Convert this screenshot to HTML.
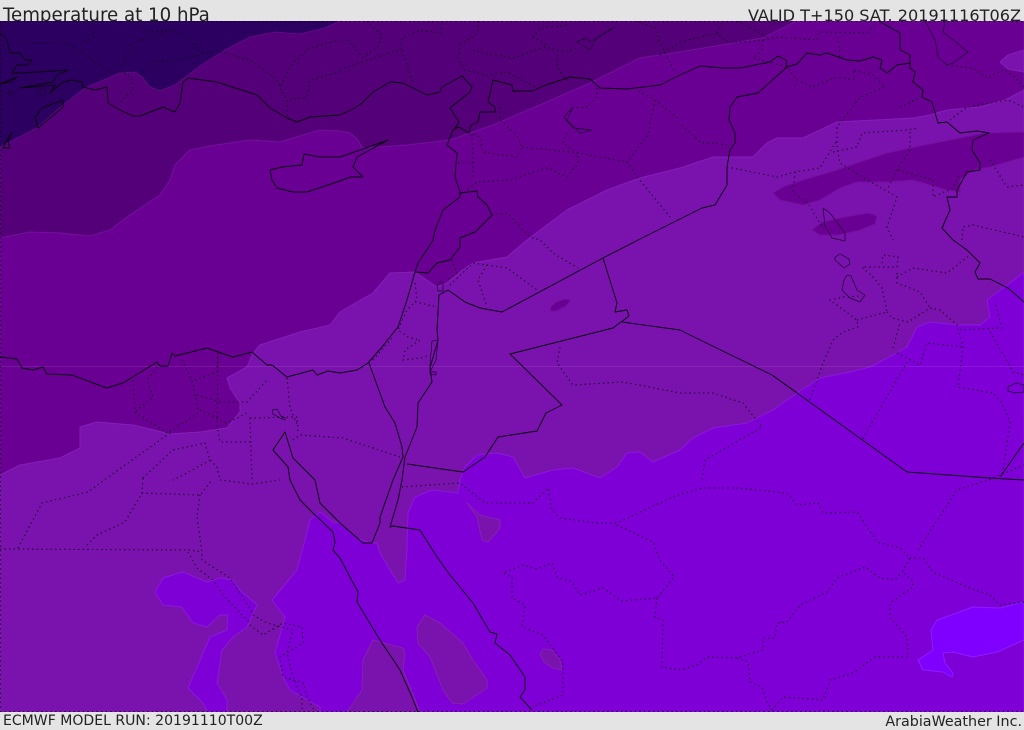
<!DOCTYPE html>
<html lang="en"><head><meta charset="utf-8"><title>Temperature at 10 hPa</title>
<style>
html,body{margin:0;padding:0;background:#e4e4e4;}
body{width:1024px;height:729px;overflow:hidden;position:relative;font-family:"DejaVu Sans","Liberation Sans",sans-serif;color:#222;}
.t{position:absolute;white-space:nowrap;line-height:1;}
svg{position:absolute;left:0;top:21px;}
.s{fill:none;stroke:#0a0010;stroke-width:.95;stroke-linejoin:round;}
.n{fill:none;stroke:#1d0030;stroke-width:.7;stroke-linejoin:round;}
.d{fill:none;stroke:#0a0010;stroke-width:1.1;stroke-dasharray:1.2 3.4;stroke-linejoin:round;}
.f{stroke-width:1;stroke-linejoin:round;}
</style></head><body>
<div class="t" style="left:3px;top:7px;font-size:18.2px;">Temperature at 10 hPa</div>
<div class="t" style="right:3px;top:8px;font-size:16.1px;">VALID T+150 SAT. 20191116T06Z</div>
<div class="t" style="left:3px;top:714px;font-size:14.05px;">ECMWF MODEL RUN: 20191110T00Z</div>
<div class="t" style="right:2px;top:715px;font-size:14.3px;">ArabiaWeather Inc.</div>
<svg width="1024" height="691" viewBox="0 21 1024 691">
<rect x="0" y="21" width="1024" height="691" fill="#2c0060"/>
<polygon class="f" fill="#530079" stroke="#5e0a82" points="0,147 37,128 62,106 85,88 120,73 135,72 143,78 150,87 160,91 175,85 200,66 225,50 250,37 275,32 300,34 325,28 340,21 1024,21 1024,712 0,712"/>
<polygon class="f" fill="#690093" stroke="#74109c" points="0,238 30,232 60,233 90,236 110,230 130,215 160,195 170,180 175,165 190,150 210,146 250,140 280,142 320,130 340,131 350,133 358,140 362,148 407,145 450,140 493,125 540,105 590,83 640,58 680,52 763,38 797,21 1024,21 1024,712 0,712"/>
<polygon class="f" fill="#7a12ad" stroke="#8420b6" points="0,475 20,465 60,458 80,448 80,427 97,422 133,425 170,434 200,432 227,428 240,412 240,403 230,388 227,378 247,367 253,353 260,345 300,332 330,325 340,312 357,302 373,293 390,273 415,272 437,287 447,283 460,272 473,263 507,257 527,240 567,210 607,190 640,178 680,168 713,157 753,157 767,143 777,138 803,138 837,122 913,118 930,115 947,110 980,107 1005,100 1024,90 1024,712 0,712"/>
<polygon class="f" fill="#690093" stroke="#74109c" points="1024,132 985,133 940,142 910,148 887,153 857,163 837,170 803,180 785,186 773,193 780,200 803,205 820,200 840,188 857,182 887,182 913,180 947,190 960,192 960,180 973,170 990,167 1024,157"/>
<polygon class="f" fill="#690093" stroke="#74109c" points="812,230 822,222 845,217 868,213 877,216 875,224 860,230 838,235 820,235"/>
<polygon class="f" fill="#690093" stroke="#74109c" points="550,308 556,302 565,299 571,300 566,306 556,311 551,311"/>
<polygon class="f" fill="#7a12ad" stroke="#8420b6" points="1024,50 1008,55 1000,62 1008,69 1024,72"/>
<polygon class="f" fill="#7f00d6" stroke="#8a18dc" points="1024,272 1010,283 987,300 990,317 980,325 957,325 930,322 917,327 912,337 907,347 893,355 870,367 850,372 820,378 797,393 773,410 747,423 713,428 693,438 680,450 653,462 640,452 627,453 617,467 600,478 573,468 553,470 525,478 513,457 497,453 477,455 465,467 460,480 458,493 432,490 415,497 408,513 407,547 405,580 398,583 390,570 380,553 377,543 370,543 357,538 340,523 333,522 320,512 310,520 305,540 297,570 272,600 285,617 275,653 283,677 290,690 320,707 320,712 1024,712"/>
<polygon class="f" fill="#7f00d6" stroke="#8a18dc" points="257,605 240,590 233,580 220,578 207,582 197,578 183,572 163,578 155,592 163,605 182,607 193,623 207,627 220,615 228,615 227,630 210,637 188,688 203,703 208,712 227,712 227,700 217,683 222,650 233,637 247,627"/>
<polygon class="f" fill="#7a12ad" stroke="#8420b6" points="425,615 440,623 463,643 473,660 487,680 487,688 463,704 452,703 443,690 430,657 418,643 417,627"/>
<polygon class="f" fill="#7a12ad" stroke="#8420b6" points="467,503 480,515 500,520 500,528 488,542 482,540 477,517"/>
<polygon class="f" fill="#7a12ad" stroke="#8420b6" points="373,640 403,648 405,653 403,670 420,712 347,712 362,690 363,660"/>
<polygon class="f" fill="#7a12ad" stroke="#8420b6" points="543,649 552,650 560,660 562,670 553,668 544,662 540,654"/>
<polygon class="f" fill="#8000ff" stroke="#8c1cff" points="1024,602 1000,608 973,607 957,613 937,620 931,630 933,650 918,660 923,670 943,672 952,677 953,673 945,663 943,653 953,652 973,657 997,652 1024,640"/>
<rect x="0" y="366" width="1024" height="1" fill="#fff" opacity=".09"/>

<!-- solid coast and borders -->
<polyline class="s" points="83,87 95,90 107,87 108,103 120,110 133,116 140,116 163,107 175,112 180,103 183,82 188,78 217,82 257,95 270,108 287,118 297,122 310,117 340,115 355,108 362,103 373,92 390,82 403,83 427,95 440,92 442,87 462,76 472,87 470,92 450,108 459,122 455,128 459,127 469,133 471,125 478,122 480,112 495,112 495,107 488,102 493,80 512,85 513,91 533,91 543,86 570,77 590,79 600,88 627,89 660,85 680,75 700,66 723,68 740,68 770,62 778,56 786,60 787,67 797,64 807,53 820,55 827,53 847,60 860,61 873,57 882,60 880,68 887,73 897,65 910,63"/>
<polyline class="s" points="787,67 758,93 737,97 730,107 729,120 735,133 735,143 730,150 727,167 727,185 715,205 702,208 680,219 638,240 603,258 502,312 480,308 465,302 458,297 448,290 439,295 437,330 438,340 430,368 432,382 418,403 417,427 405,457"/>
<polyline class="s" points="603,258 617,303 615,312 627,310 629,316 613,328 510,354 562,405 546,413 537,431 498,437 485,457 463,472 407,464"/>
<polyline class="s" points="622,322 680,330 690,335 772,375 907,472 990,478 1024,480"/>
<polyline class="s" points="1000,477 1012,460 1024,443"/>
<polyline class="s" points="880,21 882,23 900,33 900,50 910,55 910,68 915,72 913,82 923,90 922,97 932,102 938,123 947,122 960,133 977,131 989,133 973,140 972,150 980,163 980,170 967,172 957,190 957,197 947,197 950,210 942,228 953,240 967,250 980,263 975,272 978,279 990,279 1008,288 1024,302"/>
<polyline class="s" points="0,357 17,359 22,368 33,370 43,367 47,374 72,375 93,383 107,388 123,383 157,362 160,366 168,366 172,353 175,356 207,348 227,355 233,357 252,352 267,365 272,365 287,377 313,370 317,375 328,371 340,373 357,370 368,363 382,347 398,327 407,300 415,272 418,263 428,248 433,240 435,230 443,210 460,197 460,192 455,177 457,153 447,145 453,130 459,127"/>
<polyline class="s" points="415,272 428,273 437,263 450,260 460,247 460,238 475,232 492,215 487,205 478,197 477,191 460,193"/>
<polyline class="s" points="369,363 385,407 395,423 402,447 403,457 393,480 380,517 380,523 372,543 363,543 340,523 320,503 315,480 293,458 285,432 273,450 288,467 290,480 300,500 313,513 333,532 335,542 333,550 340,558 350,577 358,592 357,602 380,640 400,670 412,697 418,712"/>
<polyline class="s" points="405,457 402,480 398,500 390,527 393,526 420,530 437,557 450,575 473,603 490,632 497,634 495,643 510,655 525,677 525,690 520,697 532,710"/>
<polyline class="s" points="270,170 282,167 302,165 304,154 320,157 340,157 360,150 388,140 357,157 353,167 363,177 350,177 340,181 307,192 293,192 277,188 272,180 270,170"/>
<polyline class="s" points="0,33 3,35 7,40 10,53 20,53 25,60 32,60 28,65 17,65 12,73 23,73 68,70 57,75 53,82 20,88 55,85 50,93 63,82 72,80 82,82 83,88"/>
<polyline class="s" points="63,100 63,107 38,128 35,117 42,108 63,100"/>
<polyline class="s" points="0,84 17,77 10,82 0,84"/>
<polyline class="s" points="12,132 7,140 3,148 10,148 8,142 12,132"/>
<polyline class="n" points="8,91 14,91 14,94 8,94 8,91"/>
<polyline class="n" points="40,88 46,90 45,96 40,96 40,88"/>
<polyline class="n" points="615,27 597,38 590,50 577,42 585,38 590,42 597,38 612,28"/>
<polyline class="n" points="573,107 564,117 573,128 592,130 580,133 567,120 573,107"/>
<polyline class="n" points="925,21 935,40 938,57 947,65 953,63 968,52 957,43 943,32 945,21"/>
<polyline class="n" points="823,208 830,213 845,233 845,241 832,238 825,226 823,208"/>
<polyline class="n" points="835,257 840,254 849,259 850,264 844,268 835,260 835,257"/>
<polyline class="n" points="847,275 851,276 857,290 865,295 860,302 850,298 842,290 844,280 847,275"/>
<polyline class="n" points="440,282 443,282 443,291 438,291 437,285 440,282"/>
<polyline class="n" points="432,341 438,340 436,360 432,368 430,372 436,372 436,375 430,374 430,365 432,341"/>
<polyline class="n" points="272,410 277,409 281,416 285,418 285,420 280,418 273,414 272,410"/>
<polyline class="n" points="1008,387 1016,383 1024,385 1024,392 1015,393 1008,391 1008,387"/>

<!-- dotted borders -->
<polyline class="d" points="23,43 67,43 93,60 110,72 123,72 133,80 132,90 120,102"/>
<polyline class="d" points="93,23 93,37 80,43"/>
<polyline class="d" points="137,23 147,32 170,30 190,38 200,53 223,52 253,62 277,80 280,88 287,100 287,117"/>
<polyline class="d" points="170,30 132,43 122,67"/>
<polyline class="d" points="143,72 153,62 177,60 200,55"/>
<polyline class="d" points="340,40 310,48 293,63 287,73 280,88"/>
<polyline class="d" points="340,72 310,80 307,97 290,100"/>
<polyline class="d" points="367,21 382,35 378,47 363,57 347,40"/>
<polyline class="d" points="340,70 383,55 400,50 402,38 420,30 440,33 443,21"/>
<polyline class="d" points="402,50 413,83"/>
<polyline class="d" points="478,21 478,33 460,45 458,58 465,70 487,75 507,72 537,88"/>
<polyline class="d" points="473,50 483,53 513,58 545,47 567,52 578,47"/>
<polyline class="d" points="533,37 540,28 570,25"/>
<polyline class="d" points="533,37 547,45"/>
<polyline class="d" points="557,55 557,67 567,80"/>
<polyline class="d" points="637,21 655,28 660,43 675,72"/>
<polyline class="d" points="660,55 680,43"/>
<polyline class="d" points="597,88 597,97 587,107 573,108"/>
<polyline class="d" points="567,133 563,143 578,153 578,163 567,177 547,168 510,180 477,182 467,190"/>
<polyline class="d" points="500,107 500,120 517,135 522,147 517,157 483,152 480,137 472,133 473,163 473,180"/>
<polyline class="d" points="458,163 473,163"/>
<polyline class="d" points="522,147 578,153 627,162 648,135 655,100 637,90"/>
<polyline class="d" points="655,100 680,120"/>
<polyline class="d" points="627,162 638,178 670,217"/>
<polyline class="d" points="492,215 507,213 530,237 540,240 553,253 578,268"/>
<polyline class="d" points="450,285 473,263 507,268 537,290"/>
<polyline class="d" points="487,265 478,280 487,307"/>
<polyline class="d" points="452,260 457,273 447,280"/>
<polyline class="d" points="415,283 417,300 407,310 398,330 408,337 420,340 405,350 403,360 420,358 430,355"/>
<polyline class="d" points="415,302 437,307"/>
<polyline class="d" points="373,360 393,337"/>
<polyline class="d" points="560,347 557,363 573,385 623,382 680,393 713,393 743,403 762,427 705,460 702,480"/>
<polyline class="d" points="293,440 300,435 343,438 400,457"/>
<polyline class="d" points="133,380 135,412 167,433 200,412"/>
<polyline class="d" points="157,367 147,380 153,397 135,412"/>
<polyline class="d" points="182,360 193,383 198,410"/>
<polyline class="d" points="195,380 217,372 218,353 217,427 220,442 252,442"/>
<polyline class="d" points="197,395 220,402 247,402 267,380"/>
<polyline class="d" points="200,410 227,423 247,413"/>
<polyline class="d" points="250,418 297,417 298,433"/>
<polyline class="d" points="250,418 252,480"/>
<polyline class="d" points="287,378 290,407 298,427"/>
<polyline class="d" points="170,433 107,478"/>
<polyline class="d" points="143,478 173,450 205,443 210,460 217,467 220,480"/>
<polyline class="d" points="210,460 187,473 173,480"/>
<polyline class="d" points="0,549 190,550 202,552"/>
<polyline class="d" points="18,548 42,503 88,492 107,478"/>
<polyline class="d" points="87,545 97,535 125,522 142,493 143,478"/>
<polyline class="d" points="142,493 200,495 212,480"/>
<polyline class="d" points="220,480 252,484 280,480"/>
<polyline class="d" points="200,495 197,517 202,552 202,560 230,578 253,613"/>
<polyline class="d" points="188,552 197,568 213,580 223,595 250,623"/>
<polyline class="d" points="250,625 263,635 283,623 302,627 303,643 280,657 283,677 303,683 307,697 315,712"/>
<polyline class="d" points="253,615 267,623 293,630 287,653 292,673 302,698 302,712"/>
<polyline class="d" points="402,487 430,485 460,483 485,503 533,503 543,493 548,488 552,510 560,518 597,523 617,523 677,495 703,488 737,488 787,493 797,505 818,503 823,513 857,512 877,542 900,548 910,558 902,572 912,580 913,587 890,603 890,617 907,637 908,657 875,657 853,673 830,680 823,700 783,697 772,710"/>
<polyline class="d" points="617,525 653,542 660,560 674,577 657,598 622,601 603,588 580,595 572,582 557,577 552,563 537,569 523,565 503,573 512,577 512,598 525,605 522,627 543,635 563,662 563,695 532,707"/>
<polyline class="d" points="657,598 655,617 663,620 662,667 680,670 697,665 707,657 737,658 763,650 763,638 775,638 777,623 787,622 800,605 827,592 837,578 865,567 880,578 895,580 902,572"/>
<polyline class="d" points="737,658 748,662 750,682 762,687 767,702 772,710"/>
<polyline class="d" points="918,550 957,490 988,480 1024,465"/>
<polyline class="d" points="910,558 923,558 933,572 967,587 990,595 1000,605 1024,602"/>
<polyline class="d" points="810,400 823,363 833,340 843,332 858,327 857,320 830,300 843,297 862,296"/>
<polyline class="d" points="857,320 887,312 882,288 873,277 862,267 897,267 898,257 883,255 882,263"/>
<polyline class="d" points="887,312 892,318 908,322 930,308 940,310 957,325 963,347 958,387 993,393 1002,403 1010,422 1002,477"/>
<polyline class="d" points="897,273 897,283 920,292 930,308"/>
<polyline class="d" points="897,277 913,268 947,273 970,255"/>
<polyline class="d" points="893,348 900,323"/>
<polyline class="d" points="897,353 920,365 927,343 962,347"/>
<polyline class="d" points="907,362 862,440"/>
<polyline class="d" points="960,330 1002,328 995,303"/>
<polyline class="d" points="988,328 1013,372 1024,375"/>
<polyline class="d" points="680,42 717,33 728,42 748,42 780,37 817,40 820,32 867,33 877,23"/>
<polyline class="d" points="718,33 722,21"/>
<polyline class="d" points="738,21 767,37"/>
<polyline class="d" points="763,40 762,50 753,58 787,67 797,80 812,87 837,77 855,80 853,70 873,75 885,87 860,97 837,127 837,147 840,163 867,180 885,190 897,197 887,227 893,240"/>
<polyline class="d" points="838,37 840,57"/>
<polyline class="d" points="682,125 700,142 730,145"/>
<polyline class="d" points="727,167 777,177 795,172 820,168 837,140"/>
<polyline class="d" points="795,172 793,193 808,203 822,227"/>
<polyline class="d" points="833,152 857,147 862,133 907,130 918,128"/>
<polyline class="d" points="910,132 910,150 897,170 887,190"/>
<polyline class="d" points="900,107 920,98"/>
<polyline class="d" points="898,170 933,180 933,197 953,188 960,173"/>
<polyline class="d" points="950,120 967,107 1008,100 1024,107"/>
<polyline class="d" points="947,65 973,68 987,78 1002,70 1013,75 1024,87"/>
<polyline class="d" points="990,160 1007,187 1024,185"/>
<polyline class="d" points="962,240 963,227 973,225 1024,237"/>
<polyline class="d" points="0.5,21 0.5,712"/>
<polyline class="d" points="0,21.5 1024,21.5"/>
<polyline class="d" points="0,711.5 1024,711.5"/>
</svg>
</body></html>
